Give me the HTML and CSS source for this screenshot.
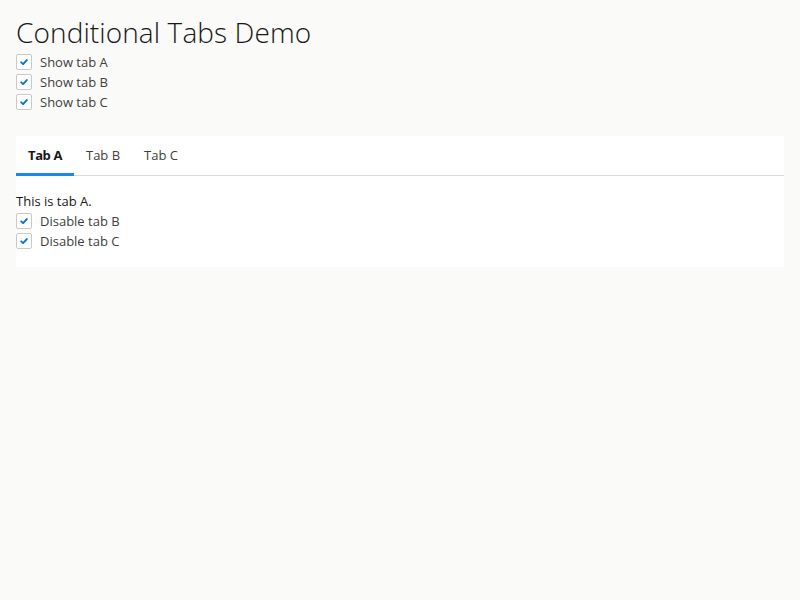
FILE: index.html
```html
<!DOCTYPE html>
<html>
<head>
<meta charset="utf-8">
<link rel="stylesheet" href="styles.css">
</head>
<body>
<div class="page">
  <h1 class="title">Conditional Tabs Demo</h1>
  <div class="checks">
    <label class="check"><span class="box"><svg viewBox="0 0 16 16" width="16" height="16"><path d="M4.8 8.4 L7 10.4 L11.2 5.8" fill="none" stroke="#0176d3" stroke-width="2.2" stroke-linecap="round" stroke-linejoin="round"/></svg></span><span class="label">Show tab A</span></label>
    <label class="check"><span class="box"><svg viewBox="0 0 16 16" width="16" height="16"><path d="M4.8 8.4 L7 10.4 L11.2 5.8" fill="none" stroke="#0176d3" stroke-width="2.2" stroke-linecap="round" stroke-linejoin="round"/></svg></span><span class="label">Show tab B</span></label>
    <label class="check"><span class="box"><svg viewBox="0 0 16 16" width="16" height="16"><path d="M4.8 8.4 L7 10.4 L11.2 5.8" fill="none" stroke="#0176d3" stroke-width="2.2" stroke-linecap="round" stroke-linejoin="round"/></svg></span><span class="label">Show tab C</span></label>
  </div>
  <div class="card">
    <div class="tabs">
      <div class="tab active">Tab A</div>
      <div class="tab">Tab B</div>
      <div class="tab">Tab C</div>
    </div>
    <div class="panel">
      <p class="text">This is tab A.</p>
      <div class="checks">
        <label class="check"><span class="box"><svg viewBox="0 0 16 16" width="16" height="16"><path d="M4.8 8.4 L7 10.4 L11.2 5.8" fill="none" stroke="#0176d3" stroke-width="2.2" stroke-linecap="round" stroke-linejoin="round"/></svg></span><span class="label">Disable tab B</span></label>
        <label class="check"><span class="box"><svg viewBox="0 0 16 16" width="16" height="16"><path d="M4.8 8.4 L7 10.4 L11.2 5.8" fill="none" stroke="#0176d3" stroke-width="2.2" stroke-linecap="round" stroke-linejoin="round"/></svg></span><span class="label">Disable tab C</span></label>
      </div>
    </div>
  </div>
</div>
</body>
</html>
```
FILE: styles.css
```css
html, body {
  margin: 0;
  padding: 0;
  background: #fafaf9;
}
body {
  font-family: "Open Sans", "Noto Sans", sans-serif;
  font-size: 13px;
  color: #181818;
}
.page {
  padding: 13px 16px 14px;
}
.title {
  margin: 0 0 1px;
  font-size: 28px;
  font-weight: 300;
  line-height: 38px;
  color: #181818;
  letter-spacing: 0.1px;
}
.checks {
  display: flex;
  flex-direction: column;
}
.check {
  display: flex;
  align-items: center;
  height: 20px;
  gap: 8px;
}
.box {
  width: 14px;
  height: 14px;
  border: 1px solid #c9c9c9;
  border-radius: 2px;
  background: #fff;
  display: flex;
  align-items: center;
  justify-content: center;
}
.box svg {
  width: 14px;
  height: 14px;
}
.label {
  color: #3e3e3c;
}
.card {
  margin-top: 24px;
  background: #fff;
}
.tabs {
  display: flex;
  height: 39px;
  border-bottom: 1px solid #dddbda;
}
.tab {
  padding: 0 12px 2px;
  display: flex;
  align-items: center;
  color: #3e3e3c;
  box-sizing: border-box;
  height: 40px;
}
.tab.active {
  font-weight: 700;
  color: #181818;
  border-bottom: 3px solid #1589ee;
  padding-top: 1px;
  padding-bottom: 0;
  letter-spacing: -0.4px;
}
.panel {
  padding: 15px 0 16px;
}
.text {
  margin: 0;
  line-height: 20px;
}
```
